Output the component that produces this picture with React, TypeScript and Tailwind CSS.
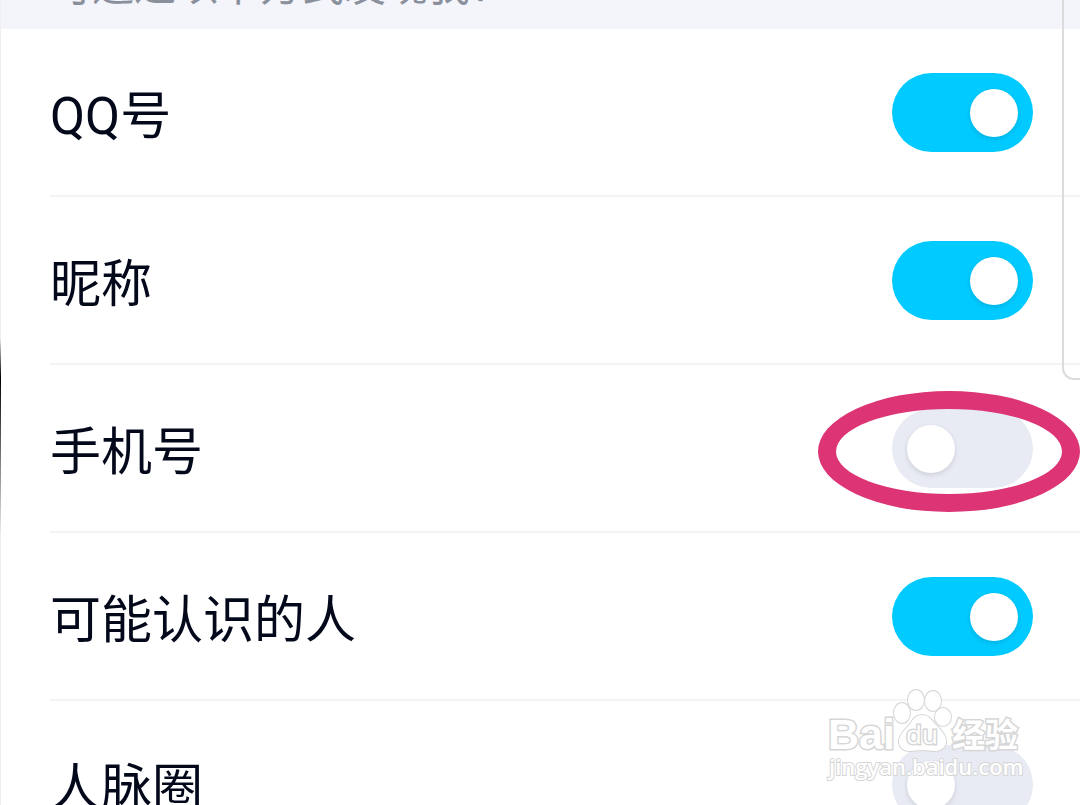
import { useState } from 'react'

const OPTIONS = [
  { id: 'qq', label: 'QQ号', on: true },
  { id: 'nickname', label: '昵称', on: true },
  { id: 'phone', label: '手机号', on: false, marked: true },
  { id: 'suggested', label: '可能认识的人', on: true },
  { id: 'circle', label: '人脉圈', on: false },
]

function Switch({ id, defaultOn }: { id: string; defaultOn: boolean }) {
  const [on, setOn] = useState(defaultOn)

  return (
    <input
      id={id}
      type="checkbox"
      role="switch"
      checked={on}
      onChange={(e) => setOn(e.target.checked)}
      className="flex h-[79px] w-[141px] shrink-0 cursor-pointer appearance-none items-center rounded-full bg-[#e8ebf4] px-[15px] before:block before:size-12 before:rounded-full before:bg-white before:shadow-[0_2px_5px_rgba(0,0,0,0.12)] before:content-[''] checked:justify-end checked:bg-[#00caff]"
    />
  )
}

function Watermark() {
  return (
    <svg
      className="pointer-events-none absolute top-[680px] right-[50px] h-[110px] w-[210px]"
      viewBox="0 0 210 110"
      fill="#ffffff"
      stroke="#d6d6d6"
      strokeWidth="1.5"
      paintOrder="stroke"
      role="img"
      aria-label="Baidu 经验"
    >
      <text x="8" y="69" fontFamily="Liberation Sans, sans-serif" fontSize="43" fontWeight="700" strokeWidth="3">
        Bai
      </text>
      <g strokeWidth="2">
        <ellipse cx="82" cy="33" rx="8" ry="10" />
        <ellipse cx="96" cy="20" rx="8" ry="10" />
        <ellipse cx="113" cy="21" rx="8" ry="10" />
        <ellipse cx="123" cy="37" rx="8" ry="9" />
        <path d="M102 35c-6 0-9 4-12 9-3 4-10 9-11 16-1 6 4 11 10 11 5 0 8-1 13-1s8 1 13 1c7 0 12-5 11-11-1-7-7-12-11-16-4-5-7-9-13-9z" />
      </g>
      <text x="86" y="64" fontFamily="Open Sans, sans-serif" fontSize="26" fontWeight="500" strokeWidth="3">
        du
      </text>
      <text x="132" y="67" fontFamily="Noto Sans CJK SC, sans-serif" fontSize="33" fontWeight="700" strokeWidth="3">
        经验
      </text>
      <text x="9" y="95" fontFamily="Open Sans, sans-serif" fontSize="22" fontWeight="600" strokeWidth="2">
        jingyan.baidu.com
      </text>
    </svg>
  )
}

export default function App() {
  return (
    <main className="relative h-screen overflow-hidden bg-white font-['Roboto','Noto_Sans_CJK_SC',sans-serif] text-[#03081a]">
      <header className="flex h-[29px] items-end overflow-hidden bg-[#f4f5fa] pb-4 pl-[50px]">
        <h1 className="text-[42px] leading-[52px] whitespace-nowrap text-[#8a8f9c]">可通过以下方式发现我：</h1>
      </header>

      <ul>
        {OPTIONS.map((o) => (
          <li
            key={o.id}
            className="ml-[50px] flex h-[168px] items-center justify-between border-b-2 border-[#f4f4f5] pt-px pr-[47px]"
          >
            <label htmlFor={o.id} className="cursor-pointer pt-2 text-[51px] leading-16">
              {o.label}
            </label>
            <div className="relative">
              <Switch id={o.id} defaultOn={o.on} />
              {o.marked && (
                <span className="pointer-events-none absolute -top-[18px] -left-[74px] h-[121px] w-[262px] rounded-[50%] border-[18px] border-[#dc3474]" />
              )}
            </div>
          </li>
        ))}
      </ul>

      {/* Edge panel and side handle */}
      <div className="pointer-events-none absolute -top-4 right-0 h-[396px] w-[18px] rounded-bl-xl border-b-2 border-l-2 border-[#dcdcde]" />
      <div className="pointer-events-none absolute inset-y-0 left-0 w-px bg-[#efeff1]" />
      <div className="pointer-events-none absolute top-[338px] left-0 h-[198px] w-px bg-linear-to-b from-transparent via-black via-20% to-transparent" />
      <Watermark />
    </main>
  )
}
